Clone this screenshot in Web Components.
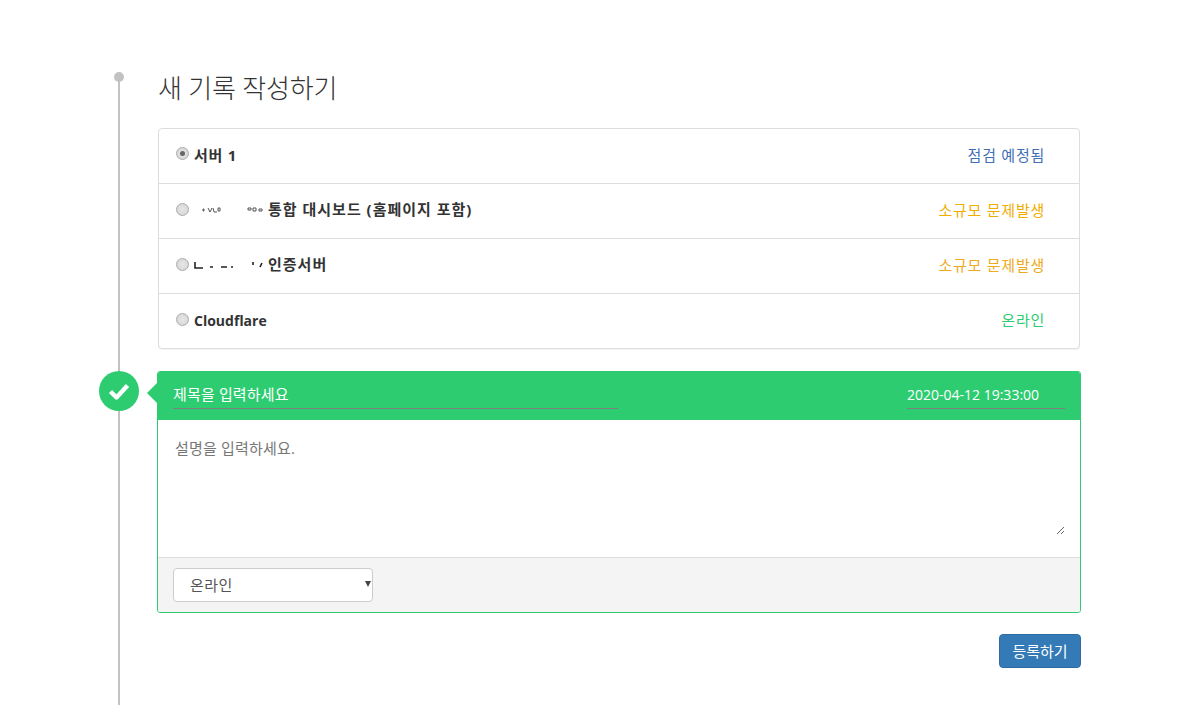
<!DOCTYPE html>
<html lang="ko">
<head>
<meta charset="utf-8">
<title>새 기록 작성하기</title>
<style>
  html, body { margin: 0; background: #fff; }
  body {
    height: 705px;
    overflow: hidden;
    font: 14px/20px "Open Sans", "Noto Sans CJK KR", sans-serif;
    color: #333;
  }
</style>
</head>
<body>
<incident-timeline>
  <h-title slot="title">새 기록 작성하기</h-title>
  <server-list slot="list">
    <server-row checked status="maintenance" label="점검 예정됨"><span>서버 1</span></server-row>
    <server-row status="minor" label="소규모 문제발생" smudge="a"><span>통합 대시보드 (홈페이지 포함)</span></server-row>
    <server-row status="minor2" label="소규모 문제발생" smudge="b"><span>인증서버</span></server-row>
    <server-row status="online" label="온라인" latin><span>Cloudflare</span></server-row>
  </server-list>
  <incident-form slot="form"></incident-form>
</incident-timeline>

<script>
const FONT = `"Open Sans", "Noto Sans CJK KR", sans-serif`;

class IncidentTimeline extends HTMLElement {
  constructor() {
    super();
    this.attachShadow({ mode: "open" });
    this.shadowRoot.innerHTML = /* html */`
    <style>
      :host {
        display: block;
        position: relative;
        height: 705px;
        box-sizing: border-box;
        padding: 71px 97px 0 157px;
      }
      .line {
        position: absolute;
        left: 118px;
        top: 76px;
        bottom: 0;
        width: 2px;
        background: #c2c2c2;
      }
      .dot {
        position: absolute;
        left: 114px;
        top: 72px;
        width: 10px;
        height: 10px;
        border-radius: 50%;
        background: #c2c2c2;
      }
      .head { padding-left: 1px; height: 57px; }
      .list { padding: 0 1px; margin-bottom: 22px; }
    </style>
    <div class="line"></div>
    <div class="dot"></div>
    <div class="head"><slot name="title"></slot></div>
    <div class="list"><slot name="list"></slot></div>
    <slot name="form"></slot>
    `;
  }
}

class HTitle extends HTMLElement {
  constructor() {
    super();
    this.attachShadow({ mode: "open" });
    this.shadowRoot.innerHTML = /* html */`
    <style>
      :host {
        display: block;
        font-size: 26px;
        line-height: 34px;
        letter-spacing: -.2px;
        font-weight: 300;
        color: #333;
      }
    </style>
    <slot></slot>
    `;
  }
}

class ServerList extends HTMLElement {
  constructor() {
    super();
    this.attachShadow({ mode: "open" });
    this.shadowRoot.innerHTML = /* html */`
    <style>
      :host {
        display: block;
        border: 1px solid #ddd;
        border-radius: 4px;
        box-shadow: 0 1px 1px rgba(0,0,0,.05);
        background: #fff;
      }
    </style>
    <slot></slot>
    `;
  }
}

const STATUS_COLORS = {
  maintenance: "#3f6fb5",
  minor: "#f0ad00",
  minor2: "#eeaa22",
  online: "#2ecc71"
};

// little leftovers of the blurred-out server names
const SMUDGES = {
  a: `<path d="M9 7h1v2H9zM14 6l2 4 2-4M19 6l1 4h3M24 6h2v3h-2zM54 6h3v2h-3zM59 6h3v3h-3zM65 7h3v2h-3z" stroke="#555" stroke-width="1" fill="none"/>`,
  b: `<path d="M1 5v6h8M16 10h3M27 10h6M37 10h2M59 5v3M68 6l-2 4" stroke="#222" stroke-width="1.6" fill="none"/>`
};

class ServerRow extends HTMLElement {
  constructor() {
    super();
    this.attachShadow({ mode: "open" });
  }

  connectedCallback() {
    const checked = this.hasAttribute("checked");
    const smudge = this.getAttribute("smudge");
    const color = STATUS_COLORS[this.getAttribute("status")];
    this.shadowRoot.innerHTML = /* html */`
    <style>
      :host {
        display: flex;
        align-items: center;
        justify-content: space-between;
        height: 55px;
        box-sizing: border-box;
        padding: 0 34px 0 17px;
        border-top: 1px solid #ddd;
      }
      :host(:first-child) { border-top: 0; height: 54px; }
      .left {
        display: flex;
        align-items: center;
        font-size: 15px;
        letter-spacing: .75px;
        font-weight: 700;
        color: #333;
      }
      :host([smudge]) .left { letter-spacing: 1px; }
      :host([latin]) .left { font-size: 14px; letter-spacing: 0; }
      .label { margin-bottom: 2px; }
      :host([smudge]) .label { margin-bottom: 4px; }
      :host([latin]) .label { margin-bottom: 0; }
      .radio {
        width: 13px;
        height: 13px;
        box-sizing: border-box;
        border-radius: 50%;
        border: 1px solid #aaa;
        background: radial-gradient(circle, #e6e6e6 0, #d4d4d4 100%);
        margin: -3px 5px 0 0;
        display: flex;
        align-items: center;
        justify-content: center;
      }
      :host(:first-child) .radio { margin-top: -5px; }
      .radio i { width: 5px; height: 5px; border-radius: 50%; background: #666; }
      svg { display: block; width: 74px; height: 16px; margin-top: -3px; }
      .status { color: ${color}; font-size: 15px; letter-spacing: .75px; margin-bottom: 2px; }
    </style>
    <div class="left">
      <span class="radio">${checked ? "<i></i>" : ""}</span>
      ${smudge ? `<svg viewBox="0 0 74 16">${SMUDGES[smudge]}</svg>` : ""}
      <span class="label"><slot></slot></span>
    </div>
    <div class="status">${this.getAttribute("label")}</div>
    `;
  }
}

class IncidentForm extends HTMLElement {
  constructor() {
    super();
    this.attachShadow({ mode: "open" });
    this.shadowRoot.innerHTML = /* html */`
    <style>
      :host { display: block; position: relative; font-family: ${FONT}; }
      .panel {
        border: 1px solid #2ecc71;
        border-radius: 3px;
        overflow: hidden;
        background: #fff;
      }
      .head {
        display: flex;
        justify-content: space-between;
        height: 48px;
        box-sizing: border-box;
        padding: 11px 15px 0;
        background: #2ecc71;
        color: #fff;
        font-size: 14px;
      }
      .field {
        height: 26px;
        line-height: 24px;
        box-sizing: border-box;
        border-bottom: 1px solid #7f7f7f;
      }
      .title { width: 445px; font-size: 15px; letter-spacing: .15px; line-height: 22px; }
      .date { width: 158px; }
      .body { padding: 0 15px; height: 137px; box-sizing: border-box; position: relative; }
      textarea {
        display: block;
        width: 100%;
        height: 115px;
        margin: 0;
        padding: 18px 2px 0;
        box-sizing: border-box;
        border: 0;
        outline: 0;
        resize: vertical;
        font: 15px/20px ${FONT};
        letter-spacing: .2px;
        color: #777;
      }
      .foot {
        height: 55px;
        box-sizing: border-box;
        padding: 10px 15px;
        background: #f4f4f4;
        border-top: 1px solid #ddd;
      }
      .select { position: relative; width: 200px; }
      select {
        display: block;
        width: 200px;
        height: 34px;
        box-sizing: border-box;
        appearance: none;
        border: 1px solid #ccc;
        border-radius: 4px;
        padding: 0 16px;
        background: #fff;
        font: 15px/20px ${FONT};
        letter-spacing: .4px;
        color: #555;
        outline: 0;
      }
      .arrow {
        position: absolute;
        right: 2px;
        top: 13px;
        width: 0;
        height: 0;
        border: 3.5px solid transparent;
        border-top: 6px solid #444;
        border-bottom: 0;
      }
      .actions { display: flex; justify-content: flex-end; padding-top: 21px; }
      button {
        width: 82px;
        height: 34px;
        border: 1px solid #2e6da4;
        border-radius: 4px;
        background: #337ab7;
        color: #fff;
        padding: 0;
        font: 15px/20px ${FONT};
      }
      .badge {
        position: absolute;
        left: -58px;
        top: 0;
        width: 40px;
        height: 40px;
        border-radius: 50%;
        background: #2ecc71;
        display: flex;
        align-items: center;
        justify-content: center;
      }
      .badge svg { width: 22px; height: 18px; display: block; }
      .tip {
        position: absolute;
        left: -10px;
        top: 12px;
        width: 0;
        height: 0;
        border: 10px solid transparent;
        border-left: 0;
        border-right-color: #2ecc71;
      }
    </style>
    <div class="badge">
      <svg viewBox="0 0 22 18"><path d="M2.5 9.5l6 6L19.5 3.5" fill="none" stroke="#fff" stroke-width="4.4" stroke-linejoin="round"/></svg>
    </div>
    <div class="tip"></div>
    <div class="panel">
      <div class="head">
        <div class="field title">제목을 입력하세요</div>
        <div class="field date">2020-04-12 19:33:00</div>
      </div>
      <div class="body"><textarea>설명을 입력하세요.</textarea></div>
      <div class="foot">
        <div class="select">
          <select><option>온라인</option></select>
          <span class="arrow"></span>
        </div>
      </div>
    </div>
    <div class="actions"><button type="button">등록하기</button></div>
    `;
  }
}

customElements.define("incident-timeline", IncidentTimeline);
customElements.define("h-title", HTitle);
customElements.define("server-list", ServerList);
customElements.define("server-row", ServerRow);
customElements.define("incident-form", IncidentForm);
</script>
</body>
</html>
